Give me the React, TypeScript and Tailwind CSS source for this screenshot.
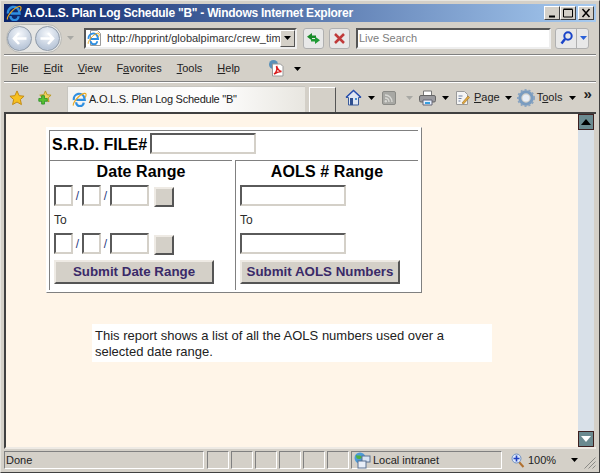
function IeLogo({ size = 16 }: { size?: number }) {
  return (
    <svg width={size} height={size} viewBox="0 0 16 16" fill="none">
      <path d="M2 8.500a5.700 5.700 0 0 1 11.200-2.100l.3 2.100H4.500M4.500 11a4 4 0 0 0 8 .3" stroke="#2f8fe0" strokeWidth="2.400" />
      <path d="M1.500 14.500C.5 12 7 3 13 1.500c2.500-.5 2.500 2 1 4.500" stroke="#e8a820" strokeWidth="1.200" />
    </svg>
  );
}

function PageIe() {
  return (
    <div className="relative w-[16px] h-[16px] shrink-0">
      <svg width="16" height="16" viewBox="0 0 16 16">
        <path d="M3.500.5h7l3 3v12h-10z" fill="#fff" stroke="#9a9a9a" />
      </svg>
      <div className="absolute left-0 top-[2px]">
        <IeLogo size={13} />
      </div>
    </div>
  );
}

function NavArrows() {
  const ball = "w-[25px] h-[25px] rounded-full border border-[#8f9aa8] bg-[radial-gradient(circle_at_50%_30%,#f4f7fb,#b9c6d8_75%,#dfe6ee)] flex items-center justify-center";
  return (
    <div className="flex items-center h-[29px] w-[56px] rounded-full bg-[#e6e6e4] border border-[#b8b8b4] gap-[3px]">
      <div className={ball}>
        <svg width="15" height="13" viewBox="0 0 15 13" fill="none">
          <path d="M7 1 2 6.500 7 12M2.500 6.500h12" stroke="#fff" strokeWidth="2.600" />
        </svg>
      </div>
      <div className={ball}>
        <svg width="15" height="13" viewBox="0 0 15 13" fill="none">
          <path d="M8 1l5 5.500L8 12M12.500 6.500H.5" stroke="#fff" strokeWidth="2.600" />
        </svg>
      </div>
    </div>
  );
}

function Caret({ color = "#000", className = "" }: { color?: string; className?: string }) {
  return (
    <svg width="7" height="4" viewBox="0 0 7 4" className={className}>
      <path d="M0 0h7L3.500 4z" fill={color} />
    </svg>
  );
}

function WinButton({ kind }: { kind: "min" | "max" | "close" }) {
  return (
    <div className="w-[16px] h-[14px] bg-[#d4d0c8] border border-t-white border-l-white border-r-[#404040] border-b-[#404040] flex items-center justify-center">
      <svg width="12" height="10" viewBox="0 0 12 10" fill="none" stroke="#000">
        {kind === "min" && <path d="M3 8.500h6" strokeWidth="2" />}
        {kind === "max" && <path d="M1.500 1.500h9v7.500h-9zM1.500 1h9" />}
        {kind === "close" && <path d="M2.500 1l7 8M9.500 1l-7 8" strokeWidth="1.500" />}
      </svg>
    </div>
  );
}

function Menu({ accent, rest, pre = "" }: { accent: string; rest: string; pre?: string }) {
  return (
    <span className="text-[#222]">
      {pre}
      <span className="underline">{accent}</span>
      {rest}
    </span>
  );
}

function FormInput({ w }: { w: string }) {
  return <div className={`${w} h-[21px] bg-white border-2 border-t-[#5a5a5a] border-l-[#5a5a5a] border-r-[#d4d0c8] border-b-[#d4d0c8]`} />;
}

function PickerButton() {
  return <div className="w-[20px] h-[20px] mt-[2px] ml-[5px] bg-[#d4d0c8] border-2 border-t-[#eeeae4] border-l-[#eeeae4] border-r-[#555] border-b-[#555]" />;
}

function DateRow() {
  return (
    <div className="flex items-start h-[21px] text-[12px] leading-[23px] text-[#333]">
      <FormInput w="w-[19px]" />
      <span className="w-[9px] text-center text-[#2a3a80]">/</span>
      <FormInput w="w-[19px]" />
      <span className="w-[9px] text-center text-[#2a3a80]">/</span>
      <FormInput w="w-[39px]" />
      <PickerButton />
    </div>
  );
}

function SubmitButton({ label }: { label: string }) {
  return (
    <div className="w-[160px] h-[24px] bg-[#d4d0c8] border-2 border-t-[#eeeae4] border-l-[#eeeae4] border-r-[#555] border-b-[#555] flex items-center justify-center text-[13.33px] font-bold text-[#3a2a68]">
      {label}
    </div>
  );
}

function ScrollButton({ up }: { up: boolean }) {
  return (
    <div className="w-[16px] h-[16px] bg-[#6b8a90] border border-[#3f2020] flex items-center justify-center">
      <svg width="10" height="6" viewBox="0 0 10 6">
        <path d={up ? "M5 0l5 6H0z" : "M0 0h10L5 6z"} fill={up ? "#000" : "#fff"} />
      </svg>
    </div>
  );
}

function StatusCell({ w, className = "" }: { w: string; className?: string }) {
  return <div className={`${w} ${className} h-[18px] border border-t-[#808080] border-l-[#808080] border-r-white border-b-white`} />;
}

export default function App() {
  return (
    <div className="w-[600px] h-[473px] overflow-hidden bg-[#d4d0c8] border border-[#e8e6e0] border-r-[#404040] border-b-[#404040] px-[3px] pt-[3px] flex flex-col text-[11px] font-['Liberation_Sans',sans-serif]">
      {/* Title bar */}
      <div className="h-[18px] shrink-0 flex items-center bg-[linear-gradient(90deg,#0a246a,#a6caf0)] pl-[2px] pr-[2px]">
        <IeLogo size={16} />
        <span className="ml-[2px] text-white font-bold text-[12px] tracking-[-0.25px] whitespace-nowrap">
          A.O.L.S. Plan Log Schedule "B" - Windows Internet Explorer
        </span>
        <div className="ml-auto flex items-center">
          <WinButton kind="min" />
          <WinButton kind="max" />
          <div className="ml-[2px]">
            <WinButton kind="close" />
          </div>
        </div>
      </div>

      {/* Address row */}
      <div className="h-[33px] shrink-0 flex items-center pl-[2px] border-b border-[#808080]">
        <NavArrows />
        <Caret color="#a8a8a4" className="ml-[5px]" />
        <div className="ml-[10px] w-[213px] h-[21px] bg-white border-2 border-t-[#555] border-l-[#555] border-r-[#eee] border-b-[#eee] flex items-center overflow-hidden">
          <div className="ml-[1px]">
            <PageIe />
          </div>
          <span className="ml-[4px] text-[11px] text-[#333] whitespace-nowrap flex-1 overflow-hidden">http://hpprint/globalpimarc/crew_tim</span>
          <div className="w-[15px] h-[17px] bg-[#d4d0c8] border border-[#555] border-t-white border-l-white flex items-center justify-center shrink-0">
            <Caret />
          </div>
        </div>
        <div className="ml-[6px] w-[21px] h-[21px] rounded-[3px] border border-[#b0b0b0] bg-[#e8e8e8] flex items-center justify-center">
          <svg width="15" height="13" viewBox="0 0 15 13">
            <path d="M6 1v2.500h4v2.500H6V8.500L1 4.800z" fill="#1a8a2a" />
            <path d="M9 12V9.500H5V7h4V4.500l5 3.700z" fill="#1f9a35" />
          </svg>
        </div>
        <div className="ml-[5px] w-[21px] h-[21px] rounded-[3px] border border-[#b0b0b0] bg-[#e8e8e8] flex items-center justify-center">
          <svg width="11" height="11" viewBox="0 0 11 11">
            <path d="M1 1l9 9M10 1l-9 9" stroke="#c03a3a" strokeWidth="2.500" />
          </svg>
        </div>
        <div className="ml-[6px] w-[195px] h-[21px] bg-white border-2 border-t-[#555] border-l-[#555] border-r-[#eee] border-b-[#eee] pl-[1px] text-[11px] leading-[17px] text-[#7d7d7d] whitespace-nowrap">
          Live Search
        </div>
        <div className="ml-[4px] w-[34px] h-[21px] rounded-[3px] border border-[#b0b0b0] bg-[#e8e8e8] flex items-center">
          <div className="w-[21px] h-full flex items-center justify-center border-r border-[#b0b0b0]">
            <svg width="13" height="14" viewBox="0 0 13 14" fill="none" stroke="#1a44c8">
              <circle cx="8" cy="5" r="3.700" strokeWidth="2" />
              <path d="M5 8l-3.500 4.500" strokeWidth="2.500" />
            </svg>
          </div>
          <Caret color="#2a60d8" className="ml-[3px]" />
        </div>
      </div>

      {/* Menu row */}
      <div className="h-[27px] shrink-0 flex items-center pl-[7px] border-t border-b border-t-white border-b-[#808080] text-[11px] whitespace-nowrap">
        <Menu accent="F" rest="ile" />
        <span className="ml-[15px]"><Menu accent="E" rest="dit" /></span>
        <span className="ml-[15px]"><Menu accent="V" rest="iew" /></span>
        <span className="ml-[15px]"><Menu pre="F" accent="a" rest="vorites" /></span>
        <span className="ml-[15px]"><Menu accent="T" rest="ools" /></span>
        <span className="ml-[15px]"><Menu accent="H" rest="elp" /></span>
        <svg width="18" height="18" viewBox="0 0 18 18" className="ml-[28px] mb-[2px]">
          <circle cx="5.500" cy="5.500" r="4.500" fill="#5a90b8" />
          <path d="M4.500 5h8l2.500 2.500V17h-10.500z" fill="#fff" stroke="#999" />
          <path d="M6 15c3-2 3-6 2.500-8 1 3 3 5 5 5.500-3 0-5 1-7.500 2.500z" fill="none" stroke="#d81e1e" strokeWidth="1.500" />
        </svg>
        <Caret className="ml-[8px]" />
      </div>

      {/* Tab and command row */}
      <div className="h-[30px] shrink-0 flex items-center border-t border-white pl-[5px] text-[11px] whitespace-nowrap">
        <svg width="16" height="16" viewBox="0 0 17 17">
          <path d="M8.500 1l2.300 5 5.200.6-3.900 3.500 1.100 5.400-4.700-2.700-4.700 2.700 1.100-5.400L1 6.600 6.200 6z" fill="#f7c020" stroke="#c08810" />
        </svg>
        <svg width="16" height="16" viewBox="0 0 17 17" className="ml-[11px]">
          <path d="M10 1l1.800 4 4.200.5-3 2.800.8 4.300-3.800-2.200-3.800 2.200.8-4.300-3-2.800L8.200 5z" fill="#f0d060" stroke="#b89820" />
          <path d="M6 6v3H3v3h3v3h3v-3h3V9H9V6z" fill="#58c030" stroke="#1f8a1f" strokeWidth=".8" />
        </svg>
        <div className="ml-[15px] self-end w-[238px] h-[26px] bg-[linear-gradient(90deg,#f4f4f2,#fff_60%,#e8e6e0)] border-t border-l border-[#c8c6c0] flex items-center pl-[4px] text-[#222]">
          <IeLogo size={15} />
          <span className="ml-[2px] tracking-[-0.25px]">A.O.L.S. Plan Log Schedule "B"</span>
        </div>
        <div className="ml-[4px] self-end w-[27px] h-[25px] border border-b-0 border-white border-r-[#555]" />
        <svg width="17" height="17" viewBox="0 0 17 17" className="ml-[9px]">
          <path d="M8.500 1.500L1 8.500h2.500V16h10V8.500H16z" fill="#dfe6f2" stroke="#3a5a9a" />
          <path d="M1 8.500L8.500 1.500 16 8.500" fill="none" stroke="#2a50b0" strokeWidth="1.500" />
          <path d="M5 9h3v7H5z" fill="#2f4f8f" />
          <path d="M10 9h2v2h-2z" fill="#4a90d0" />
        </svg>
        <Caret className="ml-[6px]" />
        <svg width="14" height="14" viewBox="0 0 14 14" className="ml-[7px]">
          <rect x=".5" y=".5" width="13" height="13" rx="1.500" fill="#a8a8a4" stroke="#8a8a86" />
          <path d="M3 4c4 0 7 3 7 7M3 7c2.500 0 4 1.500 4 4" fill="none" stroke="#d8d8d4" strokeWidth="1.400" />
          <circle cx="3.800" cy="10.300" r="1.200" fill="#d8d8d4" />
        </svg>
        <Caret color="#a8a8a4" className="ml-[10px]" />
        <svg width="17" height="16" viewBox="0 0 17 16" className="ml-[6px]">
          <path d="M4.500 1h8v5h-8z" fill="#fff" stroke="#777" />
          <rect x=".5" y="5.500" width="16" height="6.500" rx="1.500" fill="#9a9a9e" stroke="#666" />
          <path d="M4 10h9v5H4z" fill="#e8f0ff" stroke="#667" />
          <path d="M6 12h5v2H6z" fill="#38a0e0" />
        </svg>
        <Caret className="ml-[6px]" />
        <svg width="16" height="16" viewBox="0 0 16 16" className="ml-[6px]">
          <path d="M1.500 1.500h8l3 3v10h-11z" fill="#f4f4f4" stroke="#9a9a9a" />
          <path d="M3.500 6h4M3.500 8.500h3M3.500 11h2" stroke="#7080a0" />
          <path d="M7 13l6-7 1.500 1.500-6 6.500z" fill="#e0a840" stroke="#a07020" strokeWidth=".6" />
        </svg>
        <span className="ml-[3px] text-[#222]"><span className="underline">P</span>age</span>
        <Caret className="ml-[5px]" />
        <svg width="18" height="18" viewBox="0 0 18 18" className="ml-[5px]">
          <circle cx="9" cy="9" r="6.200" fill="none" stroke="#7a9cc0" strokeWidth="3" />
          <circle cx="9" cy="9" r="8" fill="none" stroke="#8aa4c0" strokeWidth="2" strokeDasharray="2 2" />
          <circle cx="9" cy="9" r="3.500" fill="#e8eef6" />
        </svg>
        <span className="ml-[2px] text-[#222]">T<span className="underline">o</span>ols</span>
        <Caret className="ml-[7px]" />
        <span className="ml-[7px] mb-[8px] text-[15px] leading-none font-bold text-[#222]">»</span>
      </div>

      {/* Page frame */}
      <div className="flex-1 min-h-0 flex border-t-2 border-l-2 border-[#404040] border-b-2 border-b-[#eeeae4]">
        <div className="flex-1 bg-[#fff5e8] pl-[40px] pt-[13px]">
          {/* Form table */}
          <div className="w-[376px] h-[166px] bg-white border border-t-white border-l-white border-r-[#808080] border-b-[#808080] pt-[2px] pl-[2px] pr-[3px]">
            <div className="h-[30px] border-t border-l border-[#808080] flex items-start pl-[2px] pt-[2px] text-[16px] font-bold leading-[22px] text-black">
              <span className="pt-[1px]">S.R.D. FILE#</span>
              <div className="ml-[3px]">
                <FormInput w="w-[106px]" />
              </div>
            </div>
            <div className="flex h-[130px]">
              <div className="w-[183px] h-full border-l border-t border-[#808080] pl-[4px]">
                <div className="text-center text-[16px] font-bold leading-[22px] text-black pr-[4px] tracking-[0.1px]">Date Range</div>
                <div className="mt-[2px]"><DateRow /></div>
                <div className="mt-[6px] h-[21px] text-[12px] leading-[16px] text-[#2b2b2b]">To</div>
                <DateRow />
                <div className="mt-[6px]"><SubmitButton label="Submit Date Range" /></div>
              </div>
              <div className="ml-[3px] w-[183px] h-full border-l border-t border-[#808080] pl-[4px]">
                <div className="text-center text-[16px] font-bold leading-[22px] text-black pr-[4px] tracking-[0.1px]">AOLS # Range</div>
                <div className="mt-[2px]"><FormInput w="w-[106px]" /></div>
                <div className="mt-[6px] h-[21px] text-[12px] leading-[16px] text-[#2b2b2b]">To</div>
                <FormInput w="w-[106px]" />
                <div className="mt-[6px]"><SubmitButton label="Submit AOLS Numbers" /></div>
              </div>
            </div>
          </div>

          {/* Report note */}
          <div className="ml-[46px] mt-[31px] w-[400px] h-[38px] bg-white pl-[3px] pt-[4px] text-[13px] leading-[16px] text-[#222]">
            This report shows a list of all the AOLS numbers used over a selected date range.
          </div>
        </div>

        {/* Scrollbar */}
        <div className="w-[16px] mr-[2px] shrink-0 flex flex-col justify-between bg-[#d8e0e8]">
          <ScrollButton up />
          <ScrollButton up={false} />
        </div>
      </div>

      {/* Status bar */}
      <div className="h-[23px] shrink-0 flex items-start pt-[2px] gap-[2px] text-[11px] text-[#222] whitespace-nowrap">
        <div className="w-[200px] h-[18px] border border-t-[#808080] border-l-[#808080] border-r-white border-b-white pl-[1px] leading-[16px]">Done</div>
        <StatusCell w="w-[22px]" className="ml-[1px]" />
        <StatusCell w="w-[22px]" />
        <StatusCell w="w-[22px]" />
        <StatusCell w="w-[22px]" />
        <StatusCell w="w-[22px]" />
        <StatusCell w="w-[22px]" />
        <div className="w-[151px] h-[18px] border border-t-[#808080] border-l-[#808080] border-r-white border-b-white flex items-center">
          <svg width="18" height="17" viewBox="0 0 18 17" className="ml-[1px]">
            <circle cx="7" cy="6" r="5.500" fill="#4a9ad8" />
            <path d="M3 3c2 1 3 0 5 1s0 3-2 3-3-1-3-4z" fill="#50b040" />
            <rect x="9" y="4" width="8" height="6" fill="#d8e4f4" stroke="#5a7090" />
            <rect x="5" y="9" width="8" height="7" fill="#e8eef8" stroke="#5a7090" />
          </svg>
          <span className="ml-[2px]">Local intranet</span>
        </div>
        <div className="flex items-center h-[18px] flex-1 relative">
          <svg width="14" height="15" viewBox="0 0 14 15" className="ml-[7px]">
            <path d="M8 9l4.500 5" stroke="#b07030" strokeWidth="2" />
            <circle cx="5.500" cy="5.500" r="4.500" fill="#dce8fa" stroke="#7090c0" />
            <path d="M5.500 2.500v6M2.500 5.500h6" stroke="#2040c0" strokeWidth="1.600" />
          </svg>
          <span className="ml-[3px]">100%</span>
          <Caret className="ml-[15px]" />
          <svg width="13" height="13" viewBox="0 0 13 13" className="absolute right-[0px] bottom-[0px]" fill="none">
            <path d="M12.500 1.500l-11 11M12.500 5.500l-7 7M12.500 9.500l-3 3" stroke="#8a8a86" />
          </svg>
        </div>
      </div>
    </div>
  );
}
